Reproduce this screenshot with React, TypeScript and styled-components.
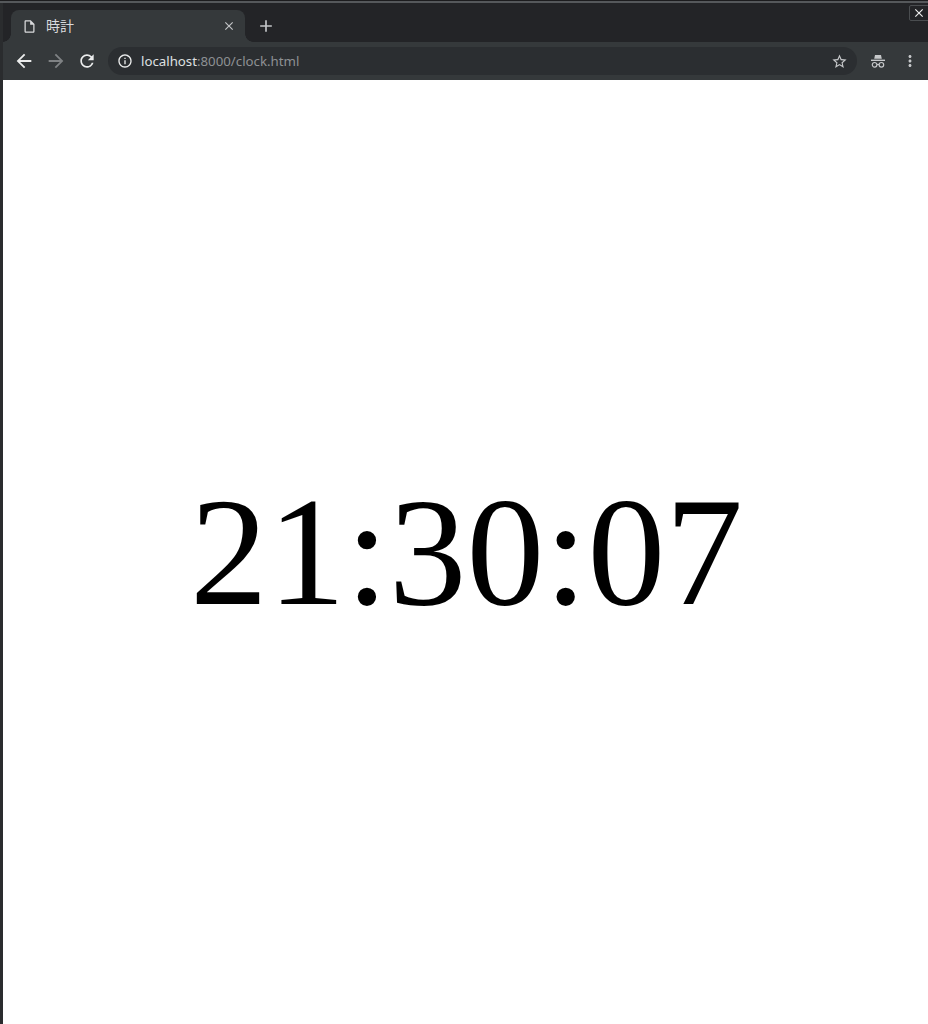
import React from 'react';
import styled, { createGlobalStyle } from 'styled-components';
import {
  MdAdd,
  MdArrowBack,
  MdArrowForward,
  MdClose,
  MdInfoOutline,
  MdMoreVert,
  MdOutlineInsertDriveFile,
  MdRefresh,
  MdStarBorder,
} from 'react-icons/md';

const COLORS = {
  strip: '#232427',
  toolbar: '#35393b',
  omnibox: '#2b2e31',
  edge: '#2a2c2e',
};

const GlobalStyle = createGlobalStyle`
  html, body {
    margin: 0;
    padding: 0;
    height: 100%;
    overflow: hidden;
    background: ${COLORS.edge};
  }
`;

const Window = styled.div`
  width: 928px;
  height: 1024px;
  box-sizing: border-box;
  display: flex;
  flex-direction: column;
  border-top: 1px solid #1c1c1e;
  font-family: "Noto Sans", "Noto Sans CJK JP", sans-serif;
  position: relative;
  overflow: hidden;
`;

const TitleLine = styled.div`
  height: 2px;
  flex: none;
  background: #55585b;
`;

const Body = styled.div`
  flex: 1;
  display: flex;
  flex-direction: column;
  margin-left: 3px;
`;

const TabStrip = styled.div`
  height: 39px;
  flex: none;
  box-sizing: border-box;
  display: flex;
  align-items: flex-end;
  padding-left: 8px;
  background: ${COLORS.strip};
`;

const Tab = styled.div`
  position: relative;
  width: 234px;
  height: 32px;
  box-sizing: border-box;
  display: flex;
  align-items: center;
  padding: 0 9px 0 11px;
  border-radius: 8px 8px 0 0;
  background: ${COLORS.toolbar};
  color: #d9dadc;
  font-size: 14px;

  &::before,
  &::after {
    content: '';
    position: absolute;
    bottom: 0;
    width: 8px;
    height: 8px;
  }

  &::before {
    left: -8px;
    background: radial-gradient(circle at 0 0, transparent 7.5px, ${COLORS.toolbar} 8px);
  }

  &::after {
    right: -8px;
    background: radial-gradient(circle at 100% 0, transparent 7.5px, ${COLORS.toolbar} 8px);
  }
`;

const TabTitle = styled.span`
  flex: 1;
  margin-left: 9px;
  line-height: 1;
`;

const TabClose = styled.div`
  display: flex;
  color: #c3c5c7;
`;

const NewTab = styled.div`
  display: flex;
  align-items: center;
  height: 32px;
  margin-left: 11px;
  color: #c3c5c8;
`;

const CloseWindow = styled.div`
  position: absolute;
  top: 4px;
  right: -2px;
  width: 21px;
  height: 16px;
  box-sizing: border-box;
  display: flex;
  align-items: center;
  justify-content: center;
  padding-right: 2px;
  border: 1px solid #4a4d50;
  border-radius: 2px;
  color: #eeeeee;
`;

const Toolbar = styled.div`
  height: 38px;
  flex: none;
  box-sizing: border-box;
  display: flex;
  align-items: center;
  padding-left: 5px;
  background: ${COLORS.toolbar};
  color: #eceded;
`;

const ToolButton = styled.div<{ $dim?: boolean; $muted?: boolean }>`
  width: 31px;
  display: flex;
  justify-content: center;
  flex: none;
  color: ${(p) => (p.$dim ? '#7f8284' : p.$muted ? '#c6c8ca' : '#eceded')};

  &:first-child,
  &:last-child {
    width: 32px;
  }

  &:last-child {
    padding-left: 1px;
    box-sizing: border-box;
  }
`;

const Omnibox = styled.div`
  width: 749px;
  height: 28px;
  flex: none;
  margin: 0 5px 0 6px;
  box-sizing: border-box;
  display: flex;
  align-items: center;
  padding: 0 9px;
  border-radius: 14px;
  background: ${COLORS.omnibox};
`;

const Url = styled.span`
  flex: 1;
  margin-left: 8px;
  font-size: 13.25px;
  color: #dfe0e1;
`;

const UrlRest = styled.span`
  color: #8e9194;
`;

const Star = styled.div`
  display: flex;
  color: #c6c8ca;
`;

const Page = styled.main`
  flex: 1;
  padding-left: 2px;
  display: flex;
  align-items: center;
  justify-content: center;
  background: #ffffff;
`;

const Clock = styled.div`
  font-family: "Liberation Serif", serif;
  font-size: 155.5px;
  line-height: 1;
  color: #000000;
`;

const Incognito = () => (
  <svg width="16" height="16" viewBox="0 0 16 16" fill="none">
    <path d="M4.2 5.8 5 2h6l.8 3.8z" fill="currentColor" />
    <rect x="1" y="6.6" width="14" height="1.4" fill="currentColor" />
    <circle cx="4.6" cy="11.8" r="2.3" stroke="currentColor" strokeWidth="1.2" />
    <circle cx="11.4" cy="11.8" r="2.3" stroke="currentColor" strokeWidth="1.2" />
    <path d="M6.9 11.5h2.2" stroke="currentColor" strokeWidth="1.2" />
  </svg>
);

export default function App() {
  return (
    <Window>
      <GlobalStyle />
      <TitleLine />
      <Body>
        <TabStrip>
          <Tab>
            <MdOutlineInsertDriveFile size={15} />
            <TabTitle>時計</TabTitle>
            <TabClose>
              <MdClose size={14} />
            </TabClose>
          </Tab>
          <NewTab>
            <MdAdd size={20} />
          </NewTab>
        </TabStrip>
        <Toolbar>
          <ToolButton>
            <MdArrowBack size={22} />
          </ToolButton>
          <ToolButton $dim>
            <MdArrowForward size={22} />
          </ToolButton>
          <ToolButton>
            <MdRefresh size={20} />
          </ToolButton>
          <Omnibox>
            <MdInfoOutline size={16} />
            <Url>
              localhost<UrlRest>:8000/clock.html</UrlRest>
            </Url>
            <Star>
              <MdStarBorder size={17} />
            </Star>
          </Omnibox>
          <ToolButton $muted>
            <Incognito />
          </ToolButton>
          <ToolButton $muted>
            <MdMoreVert size={18} />
          </ToolButton>
        </Toolbar>
        <Page>
          <Clock>21:30:07</Clock>
        </Page>
      </Body>
      <CloseWindow>
        <MdClose size={14} />
      </CloseWindow>
    </Window>
  );
}
